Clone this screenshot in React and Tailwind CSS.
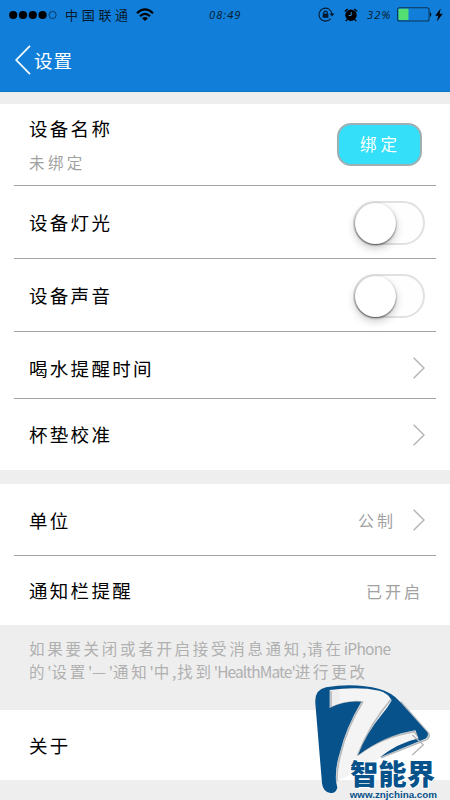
function Chevron() {
  return (
    <svg className="w-3 h-[22px] text-[#b5b5b5]" viewBox="0 0 12 22" fill="none" stroke="currentColor" strokeWidth="1.5">
      <path d="M0.6 0.8 L11 11 L0.6 21.2" />
    </svg>
  )
}

function Toggle() {
  return (
    <div className="mt-px w-[72px] h-[44px] rounded-full border-2 border-[#e1e1e1] bg-[#fefefe]">
      <div className="w-[41px] h-[41px] rounded-full bg-white shadow-[0_1px_2px_rgba(0,0,0,0.6),0_4px_8px_rgba(0,0,0,0.22)]" />
    </div>
  )
}

function Row({ label, height, line, children }) {
  return (
    <div className={`${height} ml-3.5 mr-3.5 pl-[15px] pr-[11px] flex items-center justify-between ${line ? "border-b-[1.5px] border-[#a3a3a3]" : ""}`}>
      <span className="text-[18.5px] leading-none tracking-[2.3px]">{label}</span>
      {children}
    </div>
  )
}

function StatusBar() {
  return (
    <div className="h-[29px] pl-[9px] pr-[7px] grid grid-cols-[200px_34px_1fr] items-center text-[#07182b]">
      <div className="flex items-center">
        <svg className="w-[48px] h-[10px]" viewBox="0 0 48 10" fill="#000">
          <circle cx="4.2" cy="5" r="4.1" />
          <circle cx="14" cy="5" r="4.1" />
          <circle cx="23.8" cy="5" r="4.1" />
          <circle cx="33.6" cy="5" r="4.1" />
          <circle cx="43.6" cy="5" r="3.6" fill="none" stroke="#07284a" strokeWidth="0.8" />
        </svg>
        <span className="ml-[8px] text-[13px] leading-none tracking-[3.7px]">中国联通</span>
        <svg className="ml-[4px] w-[18px] h-[14px]" viewBox="0 0 18 14" fill="none" stroke="#000" strokeWidth="2.1">
          <path d="M1 5.2 Q9 -2.4 17 5.2" />
          <path d="M4 8.3 Q9 3.3 14 8.3" />
          <path d="M9 13 L6.1 10.2 Q9 7.6 11.9 10.2 Z" fill="#000" stroke="none" />
        </svg>
      </div>
      <span className="text-[11px] leading-none tracking-[1.1px] italic whitespace-nowrap font-['Open_Sans',sans-serif]">08:49</span>
      <div className="flex items-center justify-end">
        <svg className="w-[17px] h-[15px]" viewBox="0 0 17 15" fill="none" stroke="#051a30" strokeWidth="1.1">
          <path d="M12.7 11.6 A6.5 6.5 0 1 1 14 7" />
          <path d="M11.5 6.6 H16.5 L14 9.5 Z" fill="#051a30" stroke="none" />
          <path d="M4.7 6.6 H10.4 V10.8 H4.7 Z" fill="#051a30" stroke="none" />
          <path d="M5.8 7 V5.5 A1.8 1.8 0 0 1 9.3 5.5 V7" />
        </svg>
        <svg className="ml-[9px] w-[14px] h-[14px]" viewBox="0 0 14 14">
          <circle cx="7" cy="7.3" r="5.7" fill="#000" />
          <path d="M0.8 3.5 L3.7 0.9 M13.2 3.5 L10.3 0.9 M3 11.6 L1.8 13.2 M11 11.6 L12.2 13.2" stroke="#000" strokeWidth="1.4" />
          <path d="M7.2 4 V7.4 H4.7" fill="none" stroke="#3297e0" strokeWidth="1" />
        </svg>
        <span className="ml-[9px] w-[26px] text-[11px] leading-none tracking-[1.2px] italic whitespace-nowrap font-['Open_Sans',sans-serif]">32%</span>
        <svg className="ml-[4px] w-[36px] h-[15px]" viewBox="0 0 36 15">
          <rect x="0.6" y="0.8" width="31.5" height="13.2" rx="2" fill="none" stroke="#0c3557" strokeWidth="1.1" />
          <rect x="1.5" y="1.8" width="10" height="11.2" rx="0.8" fill="#53df72" />
          <path d="M33 4.8 Q35.6 7.5 33 10.2 Z" fill="#051a30" />
        </svg>
        <svg className="ml-[2px] w-[8px] h-[14px]" viewBox="0 0 8 14">
          <path d="M5.7 0.5 L0.2 7.7 H3.3 L1.9 13.5 L7.7 5.8 H4.6 Z" fill="#000" />
        </svg>
      </div>
    </div>
  )
}

function SiteLogo() {
  return (
    <svg className="absolute left-[300px] top-[675px] w-[150px] h-[125px]" viewBox="0 0 450 375">
      <path
        d="M120 40 Q190 28 240 42 Q278 53 302 80 L384 172 Q391 185 379 193 L243 247 L150 300 L110 318 Z"
        fill="#f4f4f4"
      />
      {/* shadow along the badge edges */}
      <g fill="none" stroke="#b7babd" strokeWidth="5" strokeLinejoin="round">
        <path d="M302 80 L385 174 Q392 187 379 194 L243 248" />
        <path d="M93 48 V98 Q140 76 188 81 Q142 155 124 230 Q109 280 111 320" />
        <path d="M272 74 Q208 150 173 240 Q250 184 343 170 L358 190" />
      </g>
      <path
        d="M46 85 Q43 44 78 37 Q164 23 238 42 Q277 53 300 80 L382 172 Q388 184 376 191 L240 247 Q292 205 356 190 L346 166 Q255 180 174 241 Q198 176 246 118 Q266 94 275 76 Q265 55 238 47 Q174 34 89 45 V99 Q132 76 184 80 Q137 159 120 232 Q105 278 108 319 L112 338 Q107 356 91 354 Q69 351 66 325 Z"
        fill="#07528b"
      />
      <path d="M337 180 L370 209 L337 240" fill="none" stroke="#b5b5b5" strokeWidth="4" />
      <text
        x="150"
        y="331"
        fontSize="85"
        fontWeight="900"
        textLength="255"
        lengthAdjust="spacingAndGlyphs"
        fill="#07528b"
        stroke="#fff"
        strokeWidth="6"
        paintOrder="stroke"
        fontFamily="'Noto Sans CJK SC', sans-serif"
      >
        智能界
      </text>
      <text
        x="149"
        y="369"
        fontSize="28"
        fontWeight="700"
        textLength="262"
        lengthAdjust="spacingAndGlyphs"
        fill="#07528b"
        fontFamily="'Liberation Sans', sans-serif"
      >
        www.znjchina.com
      </text>
    </svg>
  )
}

export default function App() {
  return (
    <div className="relative w-[450px] h-[800px] overflow-hidden bg-[#eeeeee] text-black font-['Noto_Sans_CJK_SC',sans-serif]">
      <header className="h-[92px] bg-[#117fd9] border-b border-[#0d74c8]">
        <StatusBar />
        <div className="h-[62px] pl-[15px] flex items-center text-white">
          <svg className="w-[16px] h-[30px]" viewBox="0 0 16 30" fill="none" stroke="currentColor" strokeWidth="1.7">
            <path d="M15 0.8 L1.2 15 L15 29.2" />
          </svg>
          <h1 className="ml-[3px] text-[18.5px] leading-none tracking-[1px]">设置</h1>
        </div>
      </header>

      <section className="mt-3 bg-white">
        <div className="h-[82px] mx-3.5 pl-[15px] pr-[14px] flex items-center justify-between border-b-[1.5px] border-[#a3a3a3]">
          <div>
            <p className="text-[18.5px] leading-none tracking-[2.3px]">设备名称</p>
            <p className="mt-[18px] text-[15.5px] leading-none tracking-[3.4px] text-[#a1a1a1]">未绑定</p>
          </div>
          <button className="w-[85px] h-[43px] pl-[2px] rounded-[14px] border-2 border-[#9eb0b4] bg-[#33dff9] text-white text-[16.5px] leading-none tracking-[4px]">
            绑定
          </button>
        </div>
        <Row label="设备灯光" height="h-[73px]" line>
          <Toggle />
        </Row>
        <Row label="设备声音" height="h-[73px]" line>
          <Toggle />
        </Row>
        <Row label="喝水提醒时间" height="pt-[6px] h-[67px]" line>
          <Chevron />
        </Row>
        <Row label="杯垫校准" height="h-[71px]">
          <Chevron />
        </Row>
      </section>

      <section className="mt-3.5 bg-white">
        <Row label="单位" height="pt-px h-[72px]" line>
          <div className="flex items-center">
            <span className="mr-[17px] text-[16px] leading-none tracking-[3px] text-[#a1a1a1]">公制</span>
            <Chevron />
          </div>
        </Row>
        <Row label="通知栏提醒" height="h-[69px]">
          <span className="mr-[2px] text-[16px] leading-none tracking-[3px] text-[#a1a1a1]">已开启</span>
        </Row>
      </section>

      <div className="h-[85px] pl-[29px] pt-[12px] text-[15.5px] leading-[23px] tracking-[2.7px] text-[#b0b0b0] whitespace-nowrap">
        <p>
          如果要关闭或者开启接受消息通知<span className="tracking-[1px]">,</span>请在
          <span className="tracking-[-0.7px]">iPhone</span>
        </p>
        <p>
          的<span className="tracking-[0px]">'</span>设置<span className="tracking-[0px]">'</span>—<span className="tracking-[0px]">'</span>通知
          <span className="tracking-[0px]">'</span>中<span className="tracking-[1px]">,</span>找到
          <span className="tracking-[-0.9px]">'HealthMate'</span>进行更改
        </p>
      </div>

      <section className="bg-white">
        <Row label="关于" height="h-[70px]" />
      </section>

      <SiteLogo />
    </div>
  )
}
